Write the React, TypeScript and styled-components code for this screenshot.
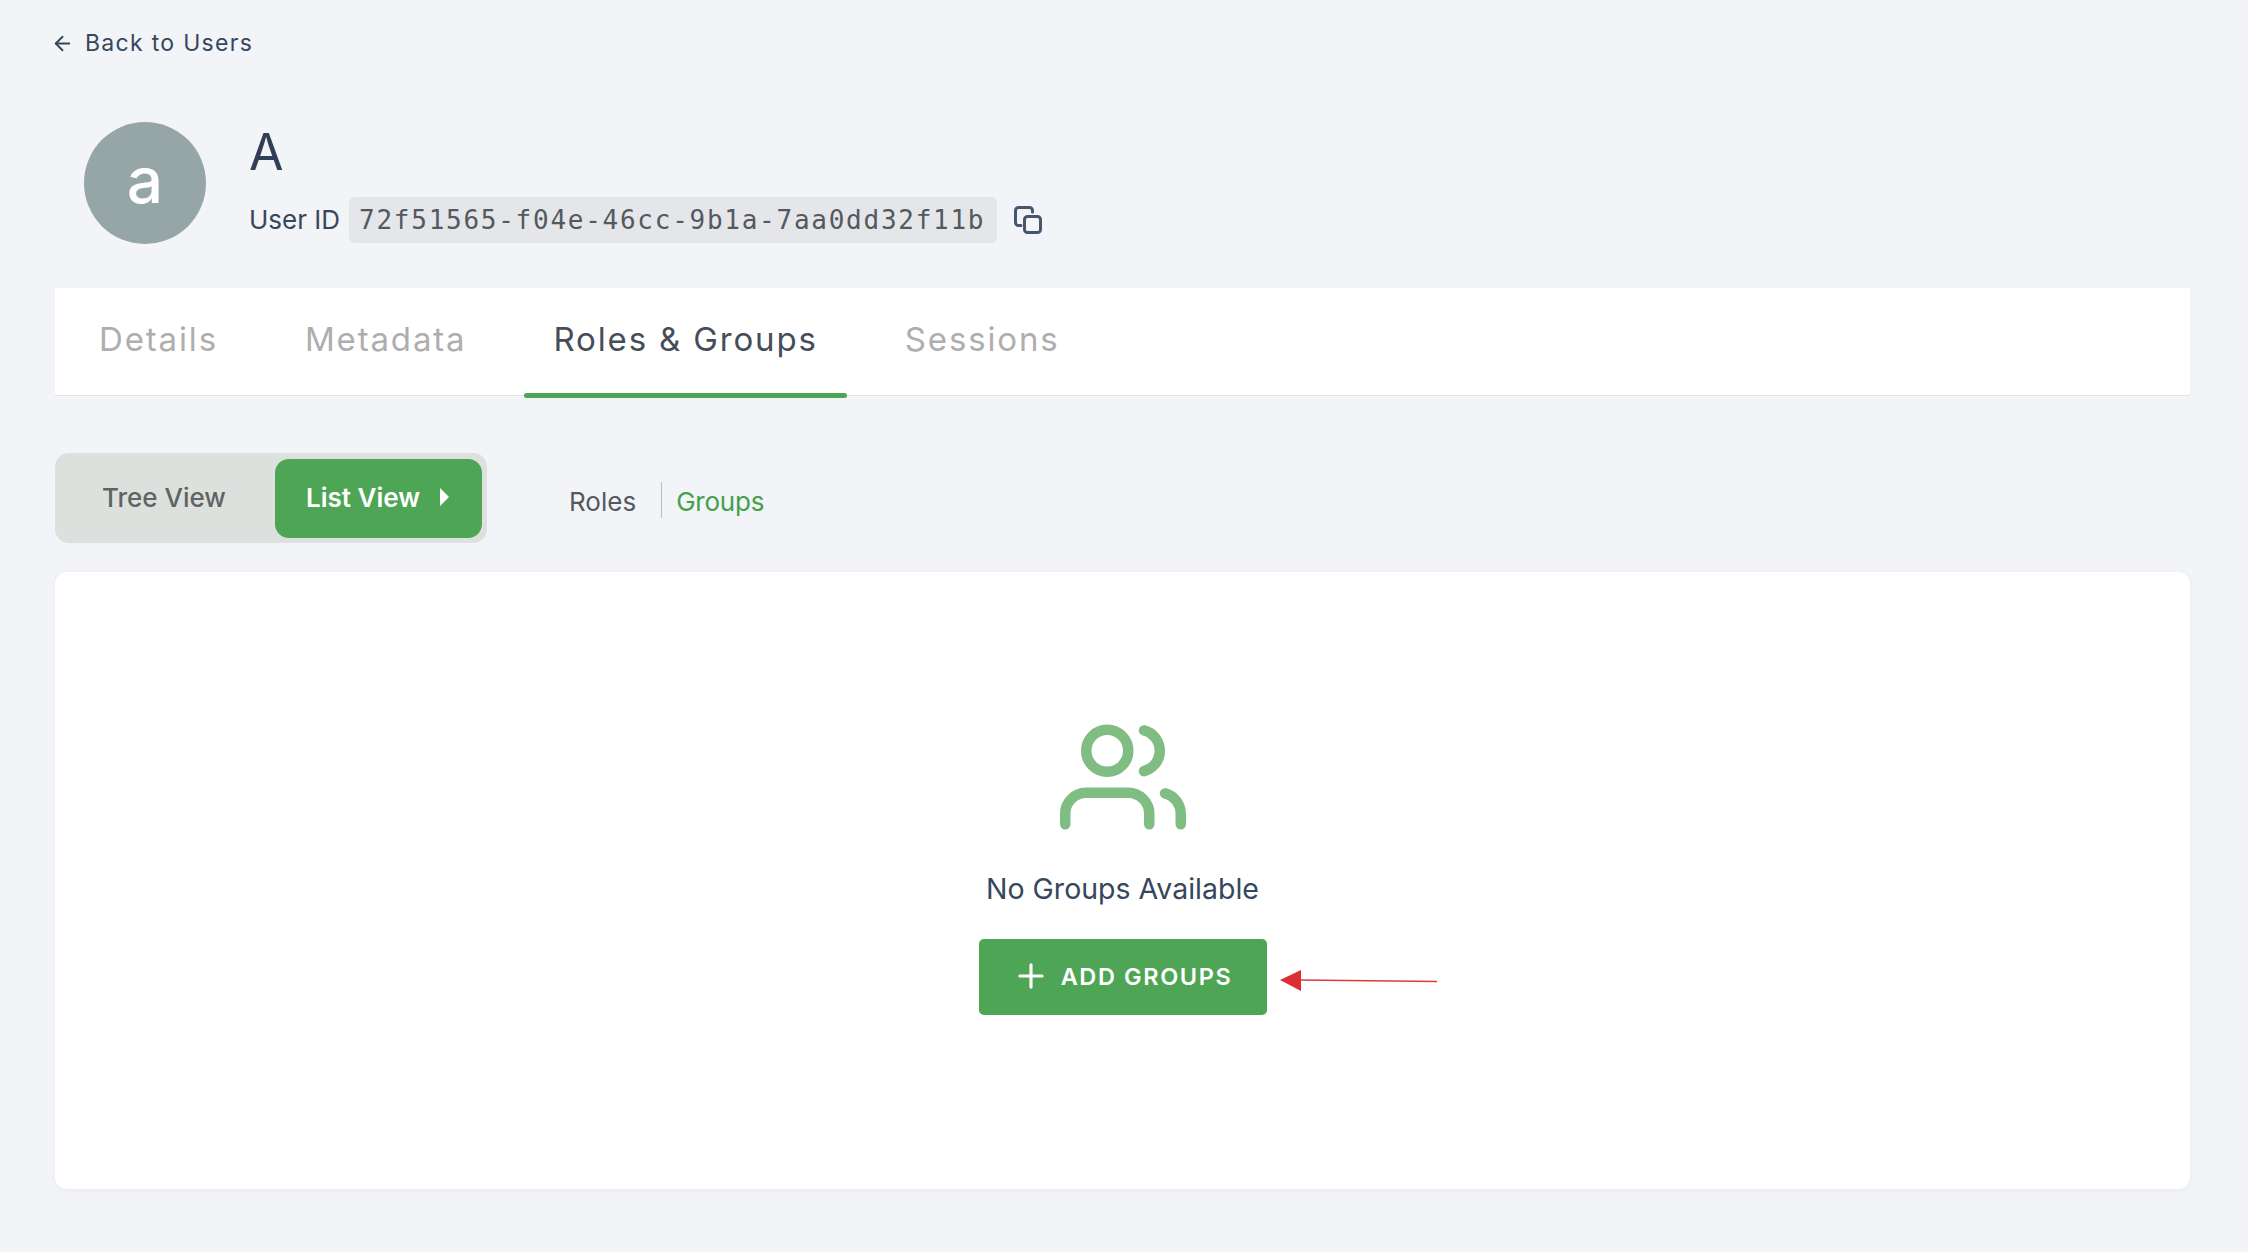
import React from "react";
import styled, { createGlobalStyle } from "styled-components";
import { ArrowLeft, Plus } from "lucide-react";
import { FiUsers } from "react-icons/fi";

const GlobalStyle = createGlobalStyle`
  html, body {
    margin: 0;
    padding: 0;
    background: #f2f4f8;
    font-family: Inter, "Liberation Sans", sans-serif;
  }
`;

const Page = styled.div`
  width: 2248px;
  height: 1252px;
  box-sizing: border-box;
  padding: 0 58px 0 55px;
  overflow: hidden;
`;

const BackLink = styled.a`
  display: flex;
  align-items: center;
  gap: 11px;
  height: 42px;
  margin: 22px 0 -1px -4px;
  color: #36475c;
  font-size: 23px;
  letter-spacing: 1.3px;
`;

const Header = styled.header`
  display: flex;
  align-items: center;
  gap: 43px;
  margin: 59px 0 0 29px;
`;

const Avatar = styled.div`
  width: 122px;
  height: 122px;
  border-radius: 50%;
  background: #96a6a6;
  color: #fff;
  font-size: 64px;
  font-weight: 500;
  line-height: 116px;
  text-align: center;
`;

const Title = styled.h1`
  margin: 0;
  height: 58px;
  color: #2f3f55;
  font-size: 50px;
  font-weight: 400;
  line-height: 56px;
`;

const IdRow = styled.div`
  display: flex;
  align-items: center;
  margin-top: 15px;
  color: #36475c;
  font-size: 26px;
`;

const IdValue = styled.code`
  margin: 0 16px 0 9px;
  padding: 0 12px 0 10px;
  height: 46px;
  border-radius: 6px;
  background: #e4e6ea;
  color: #54595f;
  font-family: "DejaVu Sans Mono", monospace;
  font-size: 26px;
  line-height: 46px;
  letter-spacing: 1.74px;
`;

const TabBar = styled.nav`
  display: flex;
  height: 107px;
  margin-top: 44px;
  padding-left: 15px;
  gap: 29px;
  background: #fff;
  border-bottom: 1px solid #e0e4e8;
`;

const Tab = styled.div<{ $active?: boolean }>`
  position: relative;
  padding: 0 29px;
  color: ${(p) => (p.$active ? "#454d59" : "#aeaeae")};
  font-size: 33px;
  line-height: 103px;
  letter-spacing: 1.85px;

  &::after {
    content: "";
    display: ${(p) => (p.$active ? "block" : "none")};
    position: absolute;
    left: 0;
    right: 0;
    bottom: -3px;
    height: 5px;
    border-radius: 3px;
    background: #4fa556;
  }
`;

const Toolbar = styled.div`
  display: flex;
  align-items: center;
  margin-top: 57px;
`;

const Toggle = styled.div`
  display: flex;
  align-items: center;
  width: 432px;
  height: 90px;
  box-sizing: border-box;
  padding: 0 5px 0 47px;
  border-radius: 14px;
  background: #dde1de;
`;

const ToggleOption = styled.div`
  flex: 1;
  padding-bottom: 2px;
  color: #5f6463;
  font-size: 26px;
  font-weight: 500;
`;

const ToggleActive = styled.div`
  display: flex;
  align-items: center;
  gap: 20px;
  width: 207px;
  height: 79px;
  box-sizing: border-box;
  padding: 0 0 2px 31px;
  border-radius: 14px;
  background: #4fa556;
  color: #fff;
  font-size: 26px;
  font-weight: 600;
`;

const Caret = styled.span`
  width: 0;
  height: 0;
  border-top: 9px solid transparent;
  border-bottom: 9px solid transparent;
  border-left: 9px solid #fff;
`;

const SubTabs = styled.div`
  display: flex;
  align-items: center;
  margin: 3px 0 0 82px;
  font-size: 26px;
`;

const SubTab = styled.div<{ $active?: boolean }>`
  color: ${(p) => (p.$active ? "#43a04b" : "#54595f")};
  padding: ${(p) => (p.$active ? "4px 0 0 14px" : "4px 25px 0 0")};
  line-height: 32px;
  border-left: ${(p) => (p.$active ? "1px solid #b9bdc1" : "none")};
  letter-spacing: ${(p) => (p.$active ? "-0.2px" : "0")};
`;

const Card = styled.section`
  display: flex;
  flex-direction: column;
  align-items: center;
  height: 617px;
  margin-top: 29px;
  padding-top: 142px;
  box-sizing: border-box;
  border-radius: 12px;
  background: #fff;
  box-shadow: 0 1px 4px rgba(30, 50, 70, 0.06);
`;

const EmptyIcon = styled(FiUsers)`
  color: #7fbd83;
`;

const EmptyText = styled.p`
  margin: 26px 0 0;
  color: #36475c;
  font-size: 28.5px;
  line-height: 46px;
`;

const ActionRow = styled.div`
  position: relative;
  margin-top: 27px;
`;

const AddButton = styled.button`
  display: flex;
  align-items: center;
  justify-content: center;
  gap: 11px;
  width: 288px;
  height: 76px;
  padding: 0 1px 2px 0;
  border: 0;
  border-radius: 5px;
  background: #4fa556;
  color: #fff;
  font-family: inherit;
  font-size: 23.5px;
  font-weight: 600;
  letter-spacing: 1.6px;
`;

const Annotation = styled.svg`
  position: absolute;
  left: 301px;
  top: 29px;
`;

const CopyIcon = () => (
  <svg width="30" height="30" viewBox="0 0 30 30" fill="none" stroke="#46566b" strokeWidth="3" strokeLinejoin="round" strokeLinecap="round">
    <rect x="11.5" y="11.5" width="16" height="16" rx="3" />
    <path d="M8 20.5H5.5a3 3 0 0 1-3-3V5.5a3 3 0 0 1 3-3h11a3 3 0 0 1 3 3V7" />
  </svg>
);

export default function App() {
  return (
    <Page>
      <GlobalStyle />
      <BackLink>
        <ArrowLeft size={23} strokeWidth={2} />
        Back to Users
      </BackLink>
      <Header>
        <Avatar>a</Avatar>
        <div>
          <Title>A</Title>
          <IdRow>
            User ID
            <IdValue>72f51565-f04e-46cc-9b1a-7aa0dd32f11b</IdValue>
            <CopyIcon />
          </IdRow>
        </div>
      </Header>
      <TabBar>
        <Tab>Details</Tab>
        <Tab>Metadata</Tab>
        <Tab $active>Roles &amp; Groups</Tab>
        <Tab>Sessions</Tab>
      </TabBar>
      <Toolbar>
        <Toggle>
          <ToggleOption>Tree View</ToggleOption>
          <ToggleActive>
            List View
            <Caret />
          </ToggleActive>
        </Toggle>
        <SubTabs>
          <SubTab>Roles</SubTab>
          <SubTab $active>Groups</SubTab>
        </SubTabs>
      </Toolbar>
      <Card>
        <EmptyIcon size={126} />
        <EmptyText>No Groups Available</EmptyText>
        <ActionRow>
          <AddButton>
            <Plus size={38} strokeWidth={2} />
            ADD GROUPS
          </AddButton>
          <Annotation width="160" height="24" viewBox="0 0 160 24">
            <path d="M20 12 L157 13.5" stroke="#dd3a3a" strokeWidth="1.6" fill="none" />
            <path d="M0 12 L21 2 L21 23 Z" fill="#dc2f33" />
          </Annotation>
        </ActionRow>
      </Card>
    </Page>
  );
}
